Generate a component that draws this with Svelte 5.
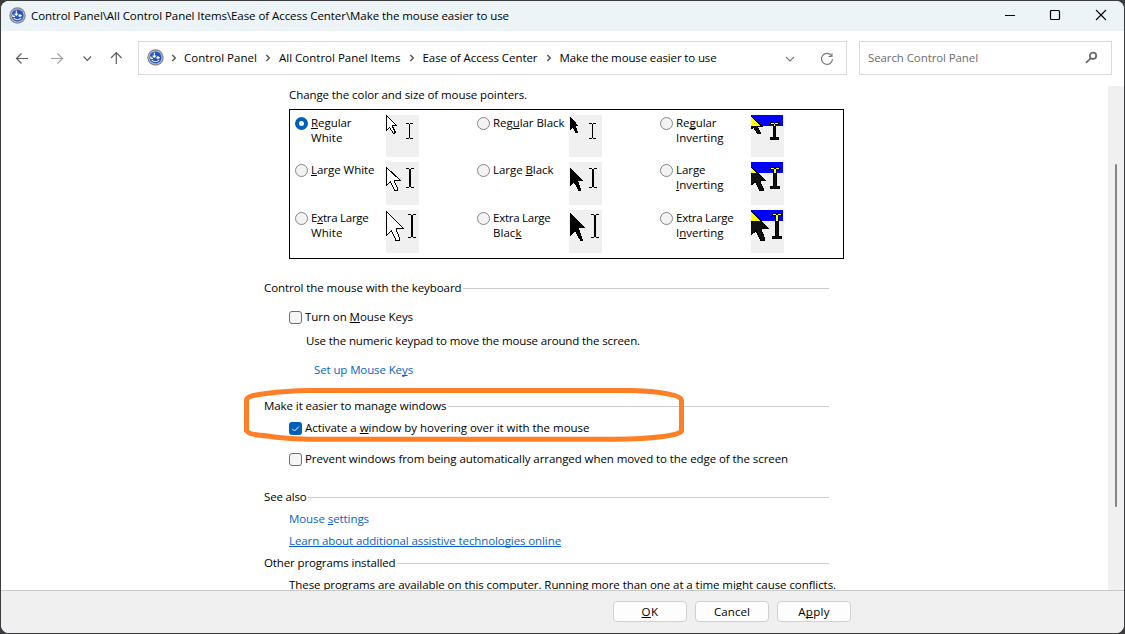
<script>
  const crumbs = [
    ['Control Panel', 73],
    ['All Control Panel Items', 121.5],
    ['Ease of Access Center', 115],
    ['Make the mouse easier to use', 157]
  ];

  // Label lines are [before, access key, after, width].
  const schemes = [
    { lines: [['', 'R', 'egular', 40.5], ['White', '', '', 31.5]], kind: 'white', size: 0, on: true },
    { lines: [['Reg', 'u', 'lar Black', 71.5]], kind: 'black', size: 0 },
    { lines: [['Re', 'g', 'ular', 40.5], ['Inverting', '', '', 47.5]], kind: 'invert', size: 0 },
    { lines: [['', 'L', 'arge White', 63.5]], kind: 'white', size: 1 },
    { lines: [['Large ', 'B', 'lack', 60.5]], kind: 'black', size: 1 },
    { lines: [['Large', '', '', 29.5], ['', 'I', 'nverting', 47.5]], kind: 'invert', size: 1 },
    { lines: [['E', 'x', 'tra Large', 57.5], ['White', '', '', 31.5]], kind: 'white', size: 2 },
    { lines: [['Extra Large', '', '', 57.5], ['Blac', 'k', '', 28.5]], kind: 'black', size: 2 },
    { lines: [['Extra Large', '', '', 57.5], ['I', 'n', 'verting', 47.5]], kind: 'invert', size: 2 }
  ];

  const arrows = {
    white: [
      'M.5 .5V15.5L3.5 12.5L7.5 18.5L9.5 17.5L6.5 11.5V10.5H10.5Z',
      'M.5 5.5V23.5L4.5 19.5L8.5 28.5H11.5V26.5L8.5 19.5V18.5H14.5Z',
      'M.5 1.5V25.5L5.5 20.5L10 30.5H13.5V28L10 19.5V18.5H17.5Z'
    ],
    black: [
      'M1.5 2.5V14L4 11.5L7 17.5H8.5L6 10.5H8.5Z',
      'M1.5 6.5V23L5 19.5L9.5 28H11.5L8.5 19V18H13Z',
      'M1.5 3.5V25.5L6 20.5L11.5 30H13.5L9.5 19V17.5H15.5Z'
    ],
    invert: [
      'M-.5 .5V14L2.5 12.5L6.5 18.5H9V17L6.5 12.5V11.5H11Z',
      'M-.5 4.5V23.5L4.5 19.5L8.5 28H12V26L9 19.5V18.5H14.5Z',
      'M-.5 .5V25.5L5 20.5L10 30.5H13.5V28L10 19.5V18.5H17.5Z'
    ]
  };

  // Yellow heads of the inverting arrows, over the blue band.
  const heads = ['M0 2V11H9Z', 'M0 6V11H5Z', 'M0 2V11H9Z'];

  // Caret cursors: left, width, top, bottom, stem left, stem width.
  const beams = [[20, 7, 8, 24, 23, 1], [20, 8, 6, 26, 23, 2], [22, 8, 4, 28, 25, 2]];
  // Outlined carets: centre x, half width, half stem, top, bottom.
  const wide = [[23.5, 4, 1, 7.5, 24.5], [24, 4.5, 1.5, 5.5, 26.5], [26, 4.5, 1.5, 3.5, 28.5]];

  function serifs([x, w, t, b, s, sw]) {
    return [t + 0.5, b - 0.5].map((y) => `M${x} ${y}H${s}M${s + sw} ${y}H${x + w}`).join('');
  }
  function outline([x, h, s, t, b]) {
    return `M${x - h} ${t}H${x - 1}L${x} ${t + 1}L${x + 1} ${t}H${x + h}V${t + 2}H${x + s}V${b - 2}H${x + h}V${b}H${x - h}V${b - 2}H${x - s}V${t + 2}H${x - h}Z`;
  }

  // Spreads a run of text over a set width.
  function fit(node, width) {
    const natural = node.getBoundingClientRect().width;
    node.style.letterSpacing = `${(width - natural) / node.textContent.length}px`;
  }
</script>

{#snippet t(a, k, b, w)}<span class="t" use:fit={w}>{a}{#if k}<u>{k}</u>{/if}{b}</span>{/snippet}

{#snippet logo()}
  <svg class="logo" width="17" height="17" viewBox="0 0 17 17">
    <circle cx="8.5" cy="8.5" r="8.2" fill="#80838a" />
    <circle cx="8.5" cy="8.5" r="7.1" fill="#b9bdc6" />
    <circle cx="8.5" cy="8.5" r="6" fill="#2451c4" />
    <path d="M4.6 10.8A4.6 4.6 0 0 0 12.2 10.8" fill="none" stroke="#dfe7fa" stroke-width="1.1" />
    <path d="M7.3 3.5V7.6M5.6 6.6L7.3 8.3L9 6.6M3.8 7.4V9.6M3.6 9.4H6M12.8 8.6H10L11.4 7.2M10.2 8.6L11.4 10" fill="none" stroke="#fff" stroke-width="1.1" />
  </svg>
{/snippet}

{#snippet sep()}
  <svg width="6" height="8" viewBox="0 0 6 8"><path d="M1.3 1L4.3 4L1.3 7" fill="none" stroke="#555" stroke-width="1.4" /></svg>
{/snippet}

<div class="desktop">
  <div class="window">
    <header>
      {@render logo()}
      {@render t('Control Panel\\All Control Panel Items\\Ease of Access Center\\Make the mouse easier to use', '', '', 478)}
      <svg class="caption" width="104" height="12" viewBox="0 0 104 12" fill="none" stroke="#000">
        <path d="M0 6.5H10" />
        <rect x="45.5" y="1.5" width="9" height="9" rx="1" stroke-width="1.2" />
        <path d="M91 1L101 11M101 1L91 11" stroke-width="1.1" />
      </svg>
    </header>

    <nav>
      <svg class="arrows" width="110" height="16" viewBox="0 0 110 16" fill="none" stroke="#5d5d5d" stroke-width="1.2">
        <path d="M13 8.5H1.5M6.5 3.5L1.5 8.5L6.5 13.5" />
        <path d="M36 8.5H47.5M42.5 3.5L47.5 8.5L42.5 13.5" stroke="#a0a0a0" />
        <path d="M68.5 6.5L72.3 10.3L76 6.5" />
        <path d="M101.3 14V2.5M96 8L101.3 2.7L106.6 8" />
      </svg>
      <div class="address">
        {@render logo()}
        {#each crumbs as [name, w]}
          <span class="sep">{@render sep()}</span>
          {@render t(name, '', '', w)}
        {/each}
        <svg class="tools" width="50" height="14" viewBox="0 0 50 14" fill="none" stroke="#777" stroke-width="1.1">
          <path d="M1 5L5 9L9 5" />
          <path d="M46.7 4A5.5 5.5 0 1 0 47.5 7M47 1.3V4.5H43.6" />
        </svg>
      </div>
      <div class="search">
        {@render t('Search Control Panel', '', '', 110)}
        <svg width="13" height="13" viewBox="0 0 13 13" fill="none" stroke="#6d6d6d"><circle cx="8" cy="4.8" r="3.2" stroke-width="1.8" /><path d="M5.6 7.3L1 11.8" stroke-width="1.8" /></svg>
      </div>
    </nav>

    <main>
      <div class="page">
        <p class="intro">{@render t('Change the color and size of mouse pointers.', '', '', 238)}</p>
        <div class="schemes">
          {#each schemes as s}
            <div class="scheme {s.kind}">
              <span class="radio" class:on={s.on}></span>
              <div class="label">
                {#each s.lines as l}<div>{@render t(l[0], l[1], l[2], l[3])}</div>{/each}
              </div>
              <svg class="preview" width="33" height={s.size ? 43 : 42} shape-rendering="crispEdges">
                {#if s.kind === 'invert'}
                  <rect width="32" height="11" fill="#00f" />
                  <path d={arrows.invert[s.size]} fill="#111" stroke="#000" />
                  <path d={outline(wide[s.size])} fill="#111" stroke="#000" />
                  <path d={heads[s.size]} fill="#ff0" />
                  <svg width="33" height="11">
                    <path d={outline(wide[s.size])} fill="#ff0" stroke="#000" />
                  </svg>
                {:else}
                  <path d={arrows[s.kind][s.size]} fill={s.kind === 'white' ? '#fff' : '#000'} stroke="#000" />
                  <path d={serifs(beams[s.size])} stroke="#000" />
                  <rect x={beams[s.size][4]} y={beams[s.size][2] + 1} width={beams[s.size][5]} height={beams[s.size][3] - beams[s.size][2] - 2} />
                {/if}
              </svg>
            </div>
          {/each}
        </div>

        <h2 class="keyboard">{@render t('Control the mouse with the keyboard', '', '', 197.5)}</h2>
        <div class="check mk"><span class="box"></span>{@render t('Turn on ', 'M', 'ouse Keys', 108)}</div>
        <p class="hint">{@render t('Use the numeric keypad to move the mouse around the screen.', '', '', 334)}</p>
        <p class="setup link">{@render t('Set up Mouse Ke', 'y', 's', 99)}</p>

        <h2 class="manage">{@render t('Make it easier to manage windows', '', '', 182.5)}</h2>
        <div class="check act">
          <span class="box on"><svg width="13" height="13" viewBox="0 0 13 13"><path d="M3.3 6.8L5.5 9L9.8 4.7" fill="none" stroke="#fff" /></svg></span>
          {@render t('Activate a ', 'w', 'indow by hovering over it with the mouse', 284.5)}
        </div>
        <div class="check prev"><span class="box"></span>{@render t('Prevent windows from being automatically arranged when moved to the edge of the screen', '', '', 483)}</div>

        <h2 class="also">{@render t('See also', '', '', 42.5)}</h2>
        <p class="item link">{@render t('Mouse ', 's', 'ettings', 80)}</p>
        <p class="item link under">{@render t('Learn about additional assistive technologies online', '', '', 272)}</p>
        <h2 class="other">{@render t('Other programs installed', '', '', 131.5)}</h2>
        <p class="item">{@render t('These programs are available on this computer. Running more than one at a time might cause conflicts.', '', '', 547)}</p>
      </div>
      <div class="scrollbar"><span class="thumb"></span></div>
    </main>

    <footer>
      <button>{@render t('', 'O', 'K', 17)}</button>
      <button>{@render t('Cancel', '', '', 36)}</button>
      <button>{@render t('A', 'p', 'ply', 31.5)}</button>
    </footer>
  </div>

  <svg class="marker" width="446" height="58" viewBox="242 386 446 58">
    <path d="M246.5 432V400C246.5 396 254 395 266 393.5C280 391.5 292 390.7 310 390.5H632C655 391.3 680 394 681.5 400V431C681 435 655 439 614 439.3H312C292 438.5 280 438.5 268 436C256 435 247 434 246.5 430" fill="none" stroke="#ff7f27" stroke-width="5" stroke-linejoin="round" />
  </svg>
</div>

<style>
  .desktop {
    position: relative;
    width: 1125px;
    height: 634px;
    box-sizing: border-box;
    padding: 1px;
    background: #3c3b3d;
    font: 11.5px/16px 'Open Sans', 'Noto Sans', sans-serif;
    color: #000;
    overflow: hidden;
  }
  .window {
    height: 632px;
    display: flex;
    flex-direction: column;
    border-radius: 8px;
    overflow: hidden;
    background: #fff;
  }
  svg { display: block; flex: none; }
  p, h2 { margin: 0; font: inherit; }
  .t { display: block; width: max-content; white-space: pre; flex: none; }
  u { text-decoration: underline; text-underline-offset: 1px; text-decoration-thickness: 1px; text-decoration-skip-ink: none; }

  header {
    flex: 0 0 30px;
    box-sizing: border-box;
    display: flex;
    align-items: flex-start;
    padding: 6px 0 0 8px;
    background: #ecf4f8;
  }
  header .t { margin: 1px 0 0 5px; }
  .caption { margin: 2px 15px 0 auto; }

  nav {
    flex: 0 0 54px;
    box-sizing: border-box;
    display: flex;
    align-items: flex-start;
    padding: 10px 12px 0 14px;
  }
  .arrows { margin: 9px 13px 0 0; }
  .address, .search {
    box-sizing: border-box;
    height: 34px;
    border: 1px solid #d9d9d9;
    display: flex;
    align-items: center;
  }
  .address { width: 709px; padding: 0 11px 1px 8px; }
  .address .logo { margin-top: -1px; }
  .sep { width: 22px; display: flex; justify-content: center; }
  .address .logo + .sep { width: 20px; }
  .tools { margin: 2px 0 0 auto; }
  .search { width: 253px; margin-left: 12px; padding: 0 13px 1px 8px; color: #6d6d6d; justify-content: space-between; }

  main { flex: 0 0 505px; display: flex; overflow: hidden; }
  .page { width: 1107px; box-sizing: border-box; padding: 2px 0 0 263px; }
  .page > * { display: flex; align-items: flex-start; height: 16px; }
  .intro { padding-left: 25px; }
  .page > .schemes {
    display: grid;
    grid-template: 47px 48px 43px / 182px 183px 170px;
    box-sizing: border-box;
    width: 555px;
    height: 150px;
    margin: 6px 0 0 25px;
    padding: 5px;
    border: 1px solid #000;
  }
  .scheme { display: flex; align-items: flex-start; }
  .radio {
    flex: none;
    box-sizing: border-box;
    width: 13px;
    height: 13px;
    margin-top: 2px;
    border: 1px solid #858585;
    border-radius: 50%;
    background: #f3f3f3;
  }
  .radio.on { border: 4px solid #005fb8; background: #fff; }
  .label { width: 73px; margin: 0 2px 0 3px; line-height: 15px; white-space: nowrap; }
  .label div { height: 15px; }
  .black .label { width: 74px; }
  .preview { background: #f0f0f0; }

  h2::after { content: ''; flex: 1; height: 1px; margin: 8px 0 0 1.5px; background: #ccc; }
  .page > h2 { width: 565px; }
  .check { padding-left: 25px; }
  .box {
    flex: none;
    box-sizing: border-box;
    width: 13px;
    height: 13px;
    margin: 2px 3px 0 0;
    border: 1px solid #6e6e6e;
    border-radius: 3px;
    background: #f5f5f5;
  }
  .box.on { border: 0; background: #005fb8; }
  .page > .keyboard { margin-top: 21px; }
  .page > .mk { margin-top: 13px; }
  .page > .hint { margin-top: 8px; padding-left: 42px; }
  .page > .setup { margin-top: 13px; padding-left: 50px; }
  .page > .manage { margin-top: 20px; }
  .page > .act { margin-top: 6px; }
  .page > .prev { margin-top: 15px; }
  .page > .also { margin-top: 22px; }
  .page > .item, .page > .other { margin-top: 6px; }
  .item { padding-left: 25px; }
  .link { color: #0a5fcb; }
  .under .t { text-decoration: underline; text-underline-offset: 1px; text-decoration-thickness: 1px; text-decoration-skip-ink: none; }

  .scrollbar { width: 16px; background: #f0f0f0; margin-top: 1px; }
  .thumb { display: block; width: 2px; height: 343px; margin: 78px 0 0 7px; background: #868686; border-radius: 1px; }

  footer {
    flex: 1;
    box-sizing: border-box;
    display: flex;
    align-items: flex-start;
    gap: 8px;
    padding: 10px 0 0 612px;
    border-top: 1px solid #c8c8c8;
    background: #f0f0f0;
  }
  button {
    box-sizing: border-box;
    width: 74px;
    height: 21px;
    padding: 1px 0 0;
    display: flex;
    justify-content: center;
    align-items: center;
    border: 1px solid #d0d0d0;
    border-radius: 4px;
    background: #fdfdfd;
    font: inherit;
    color: #000;
  }
  .marker { position: absolute; left: 242px; top: 386px; }
</style>
